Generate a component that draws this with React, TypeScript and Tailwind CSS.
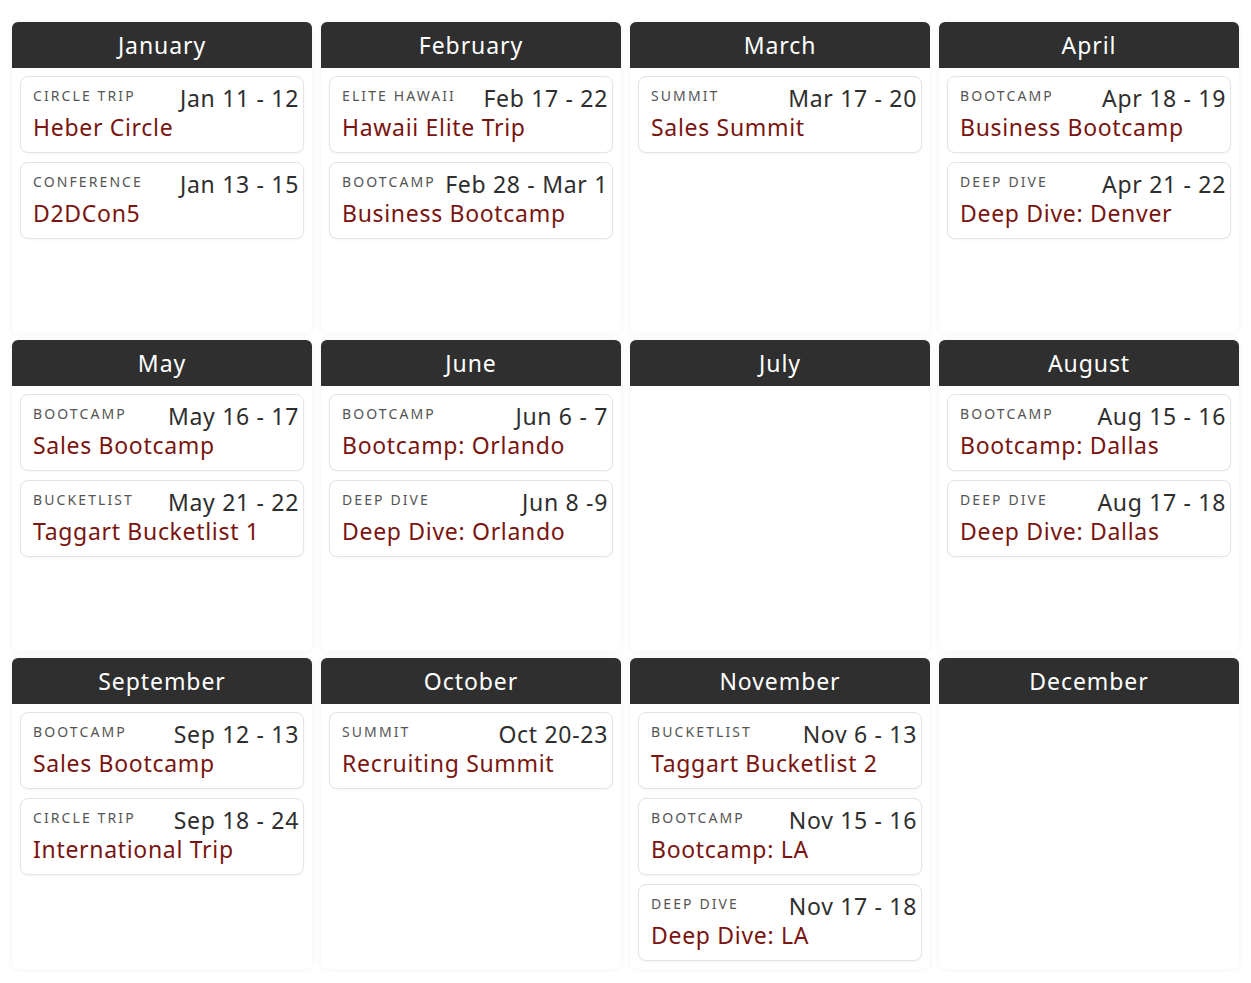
type TripEvent = {
  category: string;
  dates: string;
  title: string;
};

type Month = {
  name: string;
  events: TripEvent[];
};

const MONTHS: Month[] = [
  {
    name: "January",
    events: [
      { category: "Circle Trip", dates: "Jan 11 - 12", title: "Heber Circle" },
      { category: "Conference", dates: "Jan 13 - 15", title: "D2DCon5" },
    ],
  },
  {
    name: "February",
    events: [
      { category: "Elite Hawaii", dates: "Feb 17 - 22", title: "Hawaii Elite Trip" },
      { category: "Bootcamp", dates: "Feb 28 - Mar 1", title: "Business Bootcamp" },
    ],
  },
  {
    name: "March",
    events: [{ category: "Summit", dates: "Mar 17 - 20", title: "Sales Summit" }],
  },
  {
    name: "April",
    events: [
      { category: "Bootcamp", dates: "Apr 18 - 19", title: "Business Bootcamp" },
      { category: "Deep Dive", dates: "Apr 21 - 22", title: "Deep Dive: Denver" },
    ],
  },
  {
    name: "May",
    events: [
      { category: "Bootcamp", dates: "May 16 - 17", title: "Sales Bootcamp" },
      { category: "Bucketlist", dates: "May 21 - 22", title: "Taggart Bucketlist 1" },
    ],
  },
  {
    name: "June",
    events: [
      { category: "Bootcamp", dates: "Jun 6 - 7", title: "Bootcamp: Orlando" },
      { category: "Deep Dive", dates: "Jun 8 -9", title: "Deep Dive: Orlando" },
    ],
  },
  { name: "July", events: [] },
  {
    name: "August",
    events: [
      { category: "Bootcamp", dates: "Aug 15 - 16", title: "Bootcamp: Dallas" },
      { category: "Deep Dive", dates: "Aug 17 - 18", title: "Deep Dive: Dallas" },
    ],
  },
  {
    name: "September",
    events: [
      { category: "Bootcamp", dates: "Sep 12 - 13", title: "Sales Bootcamp" },
      { category: "Circle Trip", dates: "Sep 18 - 24", title: "International Trip" },
    ],
  },
  {
    name: "October",
    events: [{ category: "Summit", dates: "Oct 20-23", title: "Recruiting Summit" }],
  },
  {
    name: "November",
    events: [
      { category: "Bucketlist", dates: "Nov 6 - 13", title: "Taggart Bucketlist 2" },
      { category: "Bootcamp", dates: "Nov 15 - 16", title: "Bootcamp: LA" },
      { category: "Deep Dive", dates: "Nov 17 - 18", title: "Deep Dive: LA" },
    ],
  },
  { name: "December", events: [] },
];

function EventCard({ event }: { event: TripEvent }) {
  return (
    <div className="rounded-lg border border-[#e4e4e4] bg-white pl-3 pr-[4px] pt-[6px] pb-[11px] shadow-[0_1px_3px_rgba(0,0,0,0.04)]">
      <div className="flex items-center justify-between gap-2">
        <span className="mb-[5px] text-[14px] uppercase tracking-[0.15em] text-[#555]">
          {event.category}
        </span>
        <span className="whitespace-nowrap text-[23px] leading-[30px] tracking-[0.03em] text-[#2e2e2e]">
          {event.dates}
        </span>
      </div>
      <div className="text-[23px] leading-[28px] tracking-[0.03em] text-[#7a1410]">
        {event.title}
      </div>
    </div>
  );
}

function MonthPanel({ month }: { month: Month }) {
  return (
    <div className="flex flex-col rounded-md bg-white shadow-[0_0_6px_rgba(0,0,0,0.06)]">
      <div className="flex h-[46px] items-center justify-center rounded-t-md bg-[#2f2f2f] text-[23px] tracking-[0.04em] text-white">
        {month.name}
      </div>
      <div className="flex flex-col gap-[9px] px-2 pt-2 pb-2">
        {month.events.map((e) => (
          <EventCard key={e.title + e.dates} event={e} />
        ))}
      </div>
    </div>
  );
}

export default function App() {
  return (
    <div className="min-h-screen bg-white px-3 pt-[22px] pb-3 font-['Noto_Sans',sans-serif]">
      <div className="grid auto-rows-fr grid-cols-4 gap-x-[9px] gap-y-[7px]">
        {MONTHS.map((m) => (
          <MonthPanel key={m.name} month={m} />
        ))}
      </div>
    </div>
  );
}
